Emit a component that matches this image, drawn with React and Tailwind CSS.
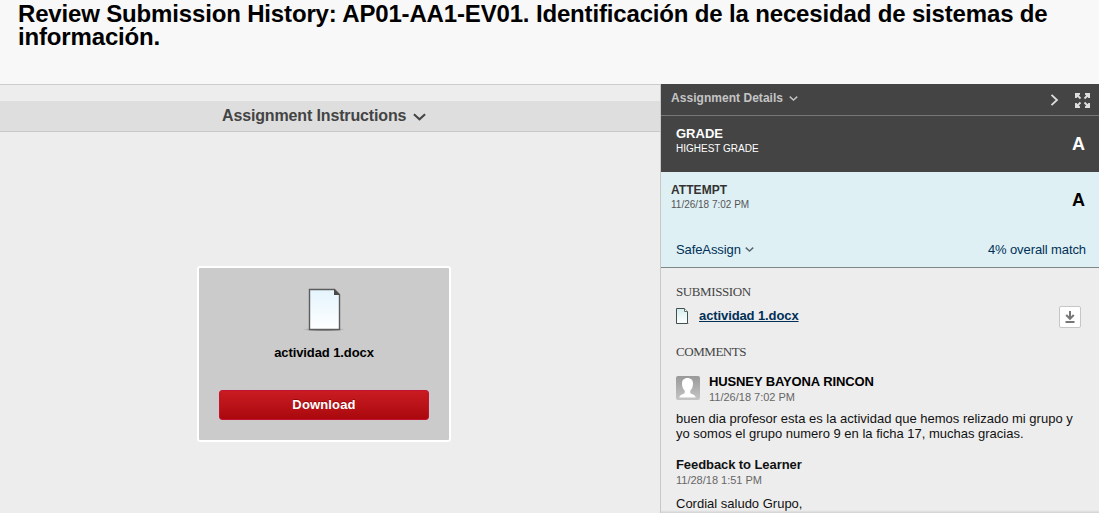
function Chevron({ className, width = 2.2 }) {
  return (
    <svg viewBox="0 0 14 8" fill="none" stroke="currentColor" strokeWidth={width} className={className}>
      <path d="M1 1l6 5.500L13 1" />
    </svg>
  );
}

function LargeDocument() {
  return (
    <svg width="44" height="44" viewBox="0 0 44 44">
      <defs>
        <linearGradient id="page" x1="0" y1="0" x2="0" y2="1">
          <stop offset="0" stopColor="#e4f4fd" />
          <stop offset="1" stopColor="#ffffff" />
        </linearGradient>
        <radialGradient id="shade">
          <stop offset="0" stopColor="#555" />
          <stop offset="0.65" stopColor="#888" stopOpacity="0.7" />
          <stop offset="1" stopColor="#aaa" stopOpacity="0" />
        </radialGradient>
      </defs>
      <ellipse cx="22" cy="41.500" rx="22" ry="2" fill="url(#shade)" />
      <path d="M7.500 1.500h25l5 5v35h-30z" fill="url(#page)" stroke="#5c5c5c" strokeWidth="1.400" />
      <path d="M32 1l6 6H32z" fill="#4a4a4a" />
    </svg>
  );
}

function SmallDocument() {
  return (
    <svg width="14" height="17" viewBox="0 0 14 17">
      <defs>
        <linearGradient id="smallPage" x1="0" y1="0" x2="0" y2="1">
          <stop offset="0" stopColor="#d5eeee" />
          <stop offset="1" stopColor="#ffffff" />
        </linearGradient>
      </defs>
      <path d="M0 15.500h13" stroke="#999" strokeOpacity="0.6" />
      <path d="M0.500 0.500h8l3 3v12h-11z" fill="url(#smallPage)" stroke="#3f504e" />
      <path d="M8.500 0.500v3h3" fill="#fff" stroke="#5f706e" />
    </svg>
  );
}

function Expand() {
  return (
    <svg width="15" height="15" viewBox="0 0 15 15" fill="#dedede" stroke="#dedede">
      <path d="M1.500 1.500l4 4M13.500 1.500L9.500 5.500M13.500 13.500L9.500 9.500M1.500 13.500l4-4" fill="none" strokeWidth="1.800" />
      <path d="M0 0h5v1.500L1.500 5H0zM15 0h-5v1.500L13.500 5H15zM15 15h-5v-1.500l3.500-3.500H15zM0 15h5v-1.500L1.500 10H0z" stroke="none" />
    </svg>
  );
}

function Avatar() {
  return (
    <svg width="24" height="24" viewBox="0 0 24 24">
      <defs>
        <linearGradient id="avatarBg" x1="0" y1="0" x2="0" y2="1">
          <stop offset="0" stopColor="#999" />
          <stop offset="1" stopColor="#c5c5c5" />
        </linearGradient>
        <clipPath id="avatarClip">
          <rect width="24" height="24" rx="2" />
        </clipPath>
      </defs>
      <g clipPath="url(#avatarClip)">
        <rect width="24" height="24" fill="url(#avatarBg)" />
        <path
          d="M11.500 2C8 2 6 4.300 6 7.500c0 3.300 1 5.500 2.700 7V16.500c0 1-1.200 1.500-2.700 2-1.500.5-2.500 1.500-2.700 3h16.400c-.2-1.500-1.200-2.500-2.700-3-1.500-.5-2.700-1-2.700-2v-2c1.700-1.500 2.700-3.700 2.700-7C17 4.300 15 2 11.500 2z"
          fill="#fff"
        />
      </g>
    </svg>
  );
}

function Viewer() {
  return (
    <main className="w-[660px] shrink-0 border-t border-[#ccc]">
      <div className="mt-4 flex h-[31px] items-center border-b border-[#c8c8c8] bg-[#dedede] pl-[222px] text-[#444]">
        <h2 className="text-base leading-5 font-bold tracking-[-0.14px] whitespace-nowrap">Assignment Instructions</h2>
        <Chevron className="mt-px ml-[7px] h-2 w-[13px]" />
      </div>
      <section className="mt-[134px] ml-[197px] flex h-[176px] w-[254px] flex-col items-center rounded-[3px] border-2 border-white bg-[#cbcbcb] pt-5">
        <LargeDocument />
        <div className="mt-[13px] text-[13px] leading-[15px] font-bold tracking-[-0.1px] text-black">actividad 1.docx</div>
        <button className="mt-[30px] h-[30px] w-[210px] rounded-[3px] border border-[#c31231] bg-linear-to-b from-[#c91b22] to-[#aa080c] text-[13px] leading-4 font-bold tracking-[0.15px] text-white [text-shadow:0_-1px_0_#70000099]">
          Download
        </button>
      </section>
    </main>
  );
}

function Details() {
  return (
    <aside className="flex h-[429px] min-w-0 flex-1 flex-col overflow-hidden border-l border-[#c8c8c8]">
      <div className="flex h-8 shrink-0 border-b border-[#777] bg-[#444] pl-2.5 text-[#c4c4c4]">
        <h3 className="mt-1.5 text-xs leading-4 font-bold tracking-[0.04px]">Assignment Details</h3>
        <Chevron className="mt-3 ml-1.5 h-[5px] w-[9px]" />
        <svg className="mt-2.5 ml-auto h-3 w-[9px]" viewBox="0 0 9 12" fill="none" stroke="#ddd" strokeWidth="1.800">
          <path d="M1.500 0.800L7 6l-5.500 5.200" />
        </svg>
        <div className="mt-[9px] mr-[9px] ml-4">
          <Expand />
        </div>
      </div>

      <div className="flex h-14 shrink-0 justify-between bg-[#444] pr-3.5 pl-[15px] text-white">
        <div className="pt-2.5">
          <div className="text-[13px] leading-4 font-bold">GRADE</div>
          <div className="text-[10px] leading-[14px]">HIGHEST GRADE</div>
        </div>
        <div className="pt-[18px] text-lg leading-5 font-bold">A</div>
      </div>

      <div className="flex h-24 shrink-0 flex-col border-b border-[#7f8888] bg-[#dff0f5]">
        <div className="flex h-[70px] justify-between pr-3.5 pl-2.5">
          <div className="pt-[11px]">
            <div className="text-xs leading-[15px] font-bold tracking-[0.05px] text-[#333]">ATTEMPT</div>
            <div className="text-[10px] leading-[14px] text-[#555]">11/26/18 7:02 PM</div>
          </div>
          <div className="pt-[18px] text-lg leading-5 font-bold text-black">A</div>
        </div>
        <div className="flex items-center pr-[13px] pl-[15px] text-[13px] leading-[15px] tracking-[-0.1px] text-[#003057]">
          <span>SafeAssign</span>
          <Chevron className="ml-1 h-[5px] w-[9px] text-[#56656e]" />
          <span className="ml-auto">4% overall match</span>
        </div>
      </div>

      <div className="relative flex min-h-0 flex-1 flex-col pr-[18px] pl-[15px]">
        <h4 className="mt-4 font-['Liberation_Serif',serif] text-[13px] leading-4 tracking-[-0.4px] text-[#444]">SUBMISSION</h4>
        <div className="mt-1.5 flex h-[22px]">
          <div className="mt-0.5">
            <SmallDocument />
          </div>
          <a className="ml-[9px] text-[13px] leading-[19px] font-bold tracking-[-0.1px] text-[#003057] underline">actividad 1.docx</a>
          <button className="ml-auto flex size-[22px] items-center justify-center rounded-[2px] border border-[#c6c6c6] bg-white">
            <svg width="10" height="12" viewBox="0 0 10 12" fill="none" stroke="#777" strokeWidth="2">
              <path d="M5 0v7M1.200 4L5 7.800 8.800 4M0.500 11h9" />
            </svg>
          </button>
        </div>
        <h4 className="mt-4 font-['Liberation_Serif',serif] text-[13px] leading-4 tracking-[-0.45px] text-[#444]">COMMENTS</h4>
        <div className="mt-[13px] flex h-[31px]">
          <div className="mt-[3px]">
            <Avatar />
          </div>
          <div className="mt-px ml-[9px]">
            <div className="text-[13px] leading-4 font-bold tracking-[-0.12px] text-black">HUSNEY BAYONA RINCON</div>
            <div className="text-[11px] leading-[15px] text-[#666]">11/26/18 7:02 PM</div>
          </div>
        </div>
        <p className="mt-[7px] text-[13px] leading-[15px] whitespace-nowrap text-[#111]">
          buen dia profesor esta es la actividad que hemos relizado mi grupo y
          <br />
          yo somos el grupo numero 9 en la ficha 17, muchas gracias.
        </p>
        <div className="mt-4 text-[13px] leading-[15px] font-bold tracking-[-0.08px] text-[#111]">Feedback to Learner</div>
        <div className="mt-[1px] text-[11px] leading-[15px] text-[#666]">11/28/18 1:51 PM</div>
        <p className="mt-2 text-[13px] leading-[15px] text-[#111]">Cordial saludo Grupo,</p>
        <div className="absolute right-0 bottom-0 left-0 h-[3px] bg-linear-to-b from-transparent to-[#d2d2d2]" />
      </div>
    </aside>
  );
}

export default function App() {
  return (
    <div className="h-[513px] w-[1099px] overflow-hidden bg-[#ededed] font-['Liberation_Sans',Arial,sans-serif]">
      <header className="h-[84px] bg-[#f8f8f8] pt-0.5 pl-[18px]">
        <h1 className="w-[1060px] text-2xl leading-[23px] font-bold tracking-[-0.16px] text-black">
          Review Submission History: AP01-AA1-EV01. Identificación de la necesidad de sistemas de información.
        </h1>
      </header>
      <div className="flex">
        <Viewer />
        <Details />
      </div>
    </div>
  );
}
